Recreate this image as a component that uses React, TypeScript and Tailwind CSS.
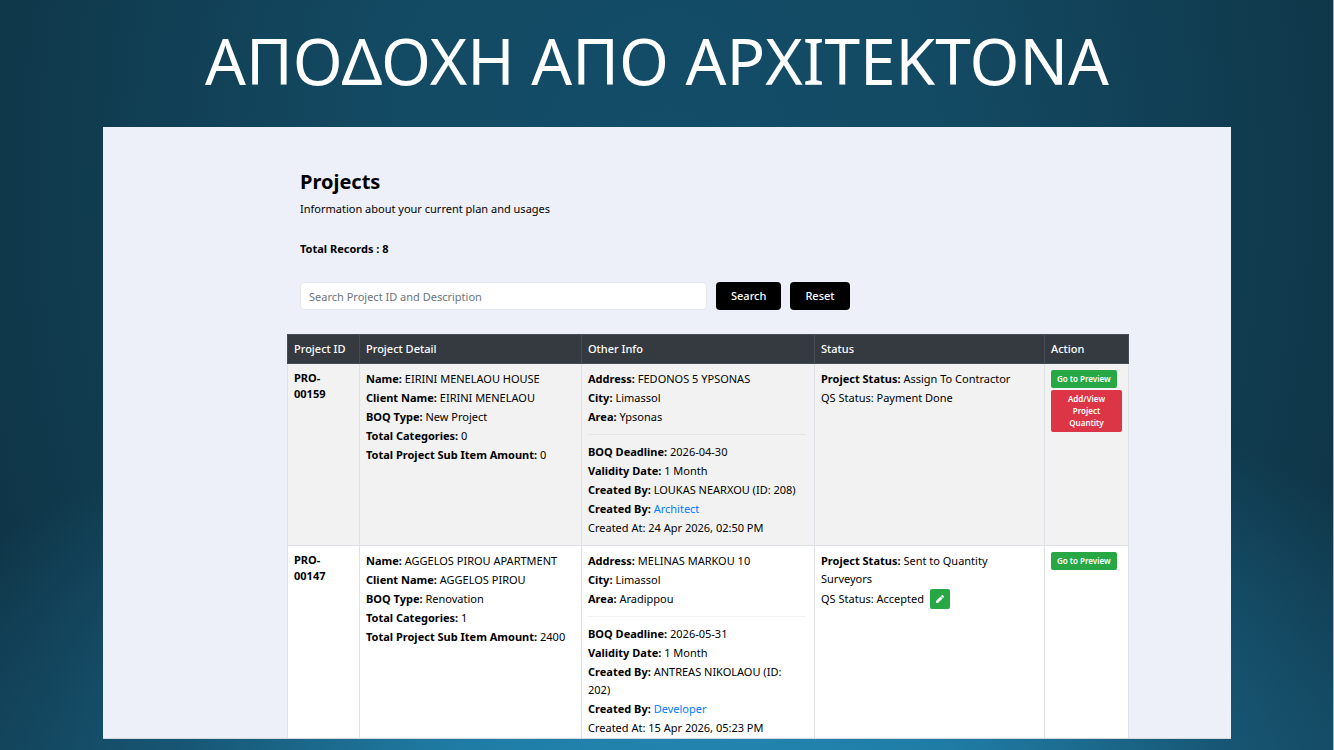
import type { ReactNode } from 'react';
import { FaPen } from 'react-icons/fa';

type Project = {
  id: string;
  name: string;
  client: string;
  boqType: string;
  categories: number;
  amount: number;
  address: string;
  city: string;
  area: string;
  deadline: string;
  validity: string;
  createdBy: string;
  role: string;
  createdAt: string;
  status: string;
  qsStatus: string;
  canEditQs?: boolean;
  canAddQuantity?: boolean;
};

const projects: Project[] = [
  {
    id: 'PRO-00159',
    name: 'EIRINI MENELAOU HOUSE',
    client: 'EIRINI MENELAOU',
    boqType: 'New Project',
    categories: 0,
    amount: 0,
    address: 'FEDONOS 5 YPSONAS',
    city: 'Limassol',
    area: 'Ypsonas',
    deadline: '2026-04-30',
    validity: '1 Month',
    createdBy: 'LOUKAS NEARXOU (ID: 208)',
    role: 'Architect',
    createdAt: '24 Apr 2026, 02:50 PM',
    status: 'Assign To Contractor',
    qsStatus: 'Payment Done',
    canAddQuantity: true,
  },
  {
    id: 'PRO-00147',
    name: 'AGGELOS PIROU APARTMENT',
    client: 'AGGELOS PIROU',
    boqType: 'Renovation',
    categories: 1,
    amount: 2400,
    address: 'MELINAS MARKOU 10',
    city: 'Limassol',
    area: 'Aradippou',
    deadline: '2026-05-31',
    validity: '1 Month',
    createdBy: 'ANTREAS NIKOLAOU (ID: 202)',
    role: 'Developer',
    createdAt: '15 Apr 2026, 05:23 PM',
    status: 'Sent to Quantity Surveyors',
    qsStatus: 'Accepted',
    canEditQs: true,
  },
];

function Field({ label, children }: { label: string; children: ReactNode }) {
  return (
    <p>
      <strong className="font-bold">{label}:</strong> {children}
    </p>
  );
}

function ProjectRow({ project }: { project: Project }) {
  return (
    <tr className="bg-white align-top odd:bg-[#f2f2f2]">
      <th scope="row" className="border border-[#dee2e6] pt-1.5 pr-4 pl-1.5 text-left leading-4 font-bold">
        {project.id}
      </th>
      <td className="border border-[#dee2e6] px-1.5 pt-1.5">
        <div className="space-y-px">
          <Field label="Name">{project.name}</Field>
          <Field label="Client Name">{project.client}</Field>
          <Field label="BOQ Type">{project.boqType}</Field>
          <Field label="Total Categories">{project.categories}</Field>
          <Field label="Total Project Sub Item Amount">{project.amount}</Field>
        </div>
      </td>
      <td className="border border-[#dee2e6] pt-1.5 pr-2 pb-2 pl-1.5">
        <div className="space-y-px">
          <Field label="Address">{project.address}</Field>
          <Field label="City">{project.city}</Field>
          <Field label="Area">{project.area}</Field>
        </div>
        <hr className="my-2 border-black/5" />
        <div className="space-y-px">
          <Field label="BOQ Deadline">{project.deadline}</Field>
          <Field label="Validity Date">{project.validity}</Field>
          <Field label="Created By">{project.createdBy}</Field>
          <Field label="Created By">
            <a href="#" className="text-[#007bff]">
              {project.role}
            </a>
          </Field>
          <p>Created At: {project.createdAt}</p>
        </div>
      </td>
      <td className="border border-[#dee2e6] px-1.5 pt-1.5">
        <div className="space-y-px">
          <Field label="Project Status">{project.status}</Field>
          <div className="flex items-center gap-1.5">
            <p>QS Status: {project.qsStatus}</p>
            {project.canEditQs && (
              <button
                type="button"
                aria-label="Edit QS status"
                className="flex h-5 w-5 items-center justify-center rounded-xs bg-[#28a745] text-white"
              >
                <FaPen className="h-2 w-2" />
              </button>
            )}
          </div>
        </div>
      </td>
      <td className="border border-[#dee2e6] px-1.5 pt-1.5">
        <div className="flex flex-col items-start gap-0.5 text-[8px] leading-3 font-semibold text-white">
          <button type="button" className="rounded-xs bg-[#28a745] px-1.5 py-[3px] whitespace-nowrap">
            Go to Preview
          </button>
          {project.canAddQuantity && (
            <button type="button" className="w-full rounded-xs bg-[#dc3545] px-1.5 py-[3px]">
              Add/View Project Quantity
            </button>
          )}
        </div>
      </td>
    </tr>
  );
}

export default function App() {
  return (
    <div className="flex h-screen flex-col overflow-hidden border-r border-[#9fb0ba] bg-[radial-gradient(ellipse_66%_58%_at_53%_106%,#2389b4_0%,#1f7ca4_30%,#1a6385b3_60%,#134a6400_100%),radial-gradient(ellipse_54%_130%_at_50%_25%,#134d69_0%,#134a63_40%,#0f3547_100%)] pr-[102px] pb-[11px] pl-[103px] font-['Noto_Sans',sans-serif] text-[11px] leading-[18px] text-black">
      <h1 className="flex h-[127px] shrink-0 items-center justify-center pr-5 pb-1.5 text-[64px] leading-none whitespace-nowrap text-white">
        ΑΠΟΔΟΧΗ ΑΠΟ ΑΡΧΙΤΕΚΤΟΝΑ
      </h1>

      <main className="min-h-0 flex-1 overflow-hidden border-b border-[#d3d8de] bg-[#edf0f9] pt-10 pr-[102px] pl-[184px]">
        <div className="px-[13px]">
          <h2 className="text-xl leading-[30px] font-bold">Projects</h2>
          <p className="mt-[3px]">Information about your current plan and usages</p>
          <p className="mt-[22px] font-bold">Total Records : 8</p>

          <form className="mt-6 flex items-center gap-[9px]" onSubmit={(e) => e.preventDefault()}>
            <input
              type="text"
              aria-label="Search Project ID and Description"
              placeholder="Search Project ID and Description"
              className="h-7 w-[407px] rounded-sm border border-[#e8e8e8] bg-white px-2 placeholder:text-[#6c757d]"
            />
            <button type="submit" className="h-7 rounded-sm bg-black px-[15px] font-medium text-white">
              Search
            </button>
            <button type="reset" className="h-7 rounded-sm bg-black px-[15px] font-medium text-white">
              Reset
            </button>
          </form>
        </div>

        <table className="mt-6 w-full table-fixed border-collapse">
          <colgroup>
            <col className="w-[72px]" />
            <col className="w-[222px]" />
            <col className="w-[233px]" />
            <col />
            <col className="w-[84px]" />
          </colgroup>
          <thead>
            <tr className="h-[29px] bg-[#343a40] text-left text-white">
              <th className="border border-[#454d55] px-1.5 font-medium">Project ID</th>
              <th className="border border-[#454d55] px-1.5 font-medium">Project Detail</th>
              <th className="border border-[#454d55] px-1.5 font-medium">Other Info</th>
              <th className="border border-[#454d55] px-1.5 font-medium">Status</th>
              <th className="border border-[#454d55] px-1.5 font-medium">Action</th>
            </tr>
          </thead>
          <tbody>
            {projects.map((project) => (
              <ProjectRow key={project.id} project={project} />
            ))}
          </tbody>
        </table>
      </main>
    </div>
  );
}
